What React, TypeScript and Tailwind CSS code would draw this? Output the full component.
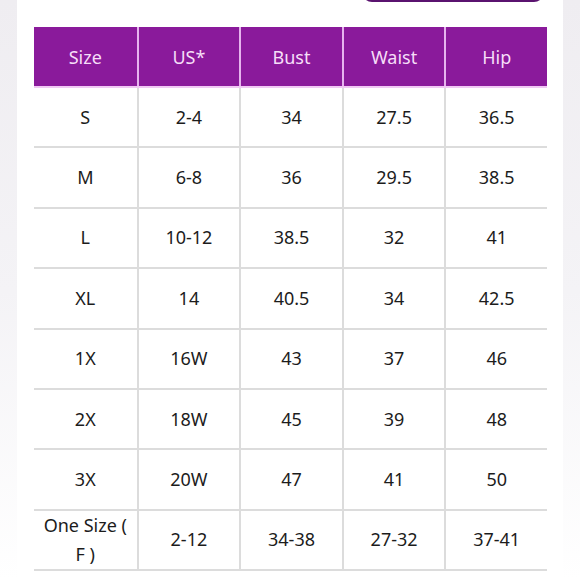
import React from "react";

const headers = ["Size", "US*", "Bust", "Waist", "Hip"];

const rows: string[][] = [
  ["S", "2-4", "34", "27.5", "36.5"],
  ["M", "6-8", "36", "29.5", "38.5"],
  ["L", "10-12", "38.5", "32", "41"],
  ["XL", "14", "40.5", "34", "42.5"],
  ["1X", "16W", "43", "37", "46"],
  ["2X", "18W", "45", "39", "48"],
  ["3X", "20W", "47", "41", "50"],
  ["One Size ( F )", "2-12", "34-38", "27-32", "37-41"],
];

export default function App() {
  return (
    <div className="w-[580px] h-[580px] overflow-hidden flex bg-gradient-to-b from-[#efedf1] via-[#f4f3f6] to-white font-['Noto_Sans',sans-serif]">
      <div className="mx-[17px] flex-1 bg-white flex flex-col">
        {/* top button peeking in */}
        <div className="flex justify-end pr-[19px] h-[2px]">
          <div className="w-[182px] h-[20px] -mt-[18px] rounded-full bg-[#5a136f]" />
        </div>

        {/* Size chart */}
        <div className="mt-[25px] ml-[17px] mr-[16px]">
          <div className="grid grid-cols-5 h-[61px] bg-[#8a1a9b] border-b-2 border-[#f0c8f4]">
            {headers.map((h, i) => (
              <div
                key={h}
                className={`flex items-center justify-center pt-[2px] text-[18px] text-[#f6def8] ${i > 0 ? "border-l-2 border-[#e6b4ee]" : ""}`}
              >
                {h}
              </div>
            ))}
          </div>
          {rows.map((row, r) => (
            <div key={r} className="grid grid-cols-5 h-[60.4px] border-b-2 border-[#dcdcdc]">
              {row.map((cell, i) => (
                <div
                  key={i}
                  className={`flex items-center justify-center text-center px-2 text-[18px] leading-[29px] text-[#1c1c1c] ${i > 0 ? "border-l-2 border-[#dcdcdc]" : ""}`}
                >
                  {cell}
                </div>
              ))}
            </div>
          ))}
        </div>
      </div>
    </div>
  );
}
